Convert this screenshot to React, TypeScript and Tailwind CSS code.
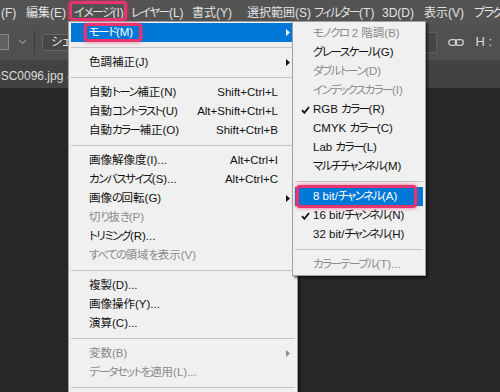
import React from "react";

type Item =
  | "sep"
  | {
      label: string;
      shortcut?: string;
      arrow?: boolean;
      disabled?: boolean;
      active?: boolean;
      checked?: boolean;
      mark?: string;
    };

const mainItems: Item[] = [
  { label: "モード(M)", arrow: true, active: true, mark: "left-[13px] top-0 h-[19px] w-[58px]" },
  "sep",
  { label: "色調補正(J)", arrow: true },
  "sep",
  { label: "自動トーン補正(N)", shortcut: "Shift+Ctrl+L" },
  { label: "自動コントラスト(U)", shortcut: "Alt+Shift+Ctrl+L" },
  { label: "自動カラー補正(O)", shortcut: "Shift+Ctrl+B" },
  "sep",
  { label: "画像解像度(I)...", shortcut: "Alt+Ctrl+I" },
  { label: "カンバスサイズ(S)...", shortcut: "Alt+Ctrl+C" },
  { label: "画像の回転(G)", arrow: true },
  { label: "切り抜き(P)", disabled: true },
  { label: "トリミング(R)..." },
  { label: "すべての領域を表示(V)", disabled: true },
  "sep",
  { label: "複製(D)..." },
  { label: "画像操作(Y)..." },
  { label: "演算(C)..." },
  "sep",
  { label: "変数(B)", disabled: true, arrow: true },
  { label: "データセットを適用(L)...", disabled: true },
  "sep",
];

const modeItems: Item[] = [
  { label: "モノクロ 2 階調(B)", disabled: true },
  { label: "グレースケール(G)" },
  { label: "ダブルトーン(D)", disabled: true },
  { label: "インデックスカラー(I)", disabled: true },
  { label: "RGB カラー(R)", checked: true },
  { label: "CMYK カラー(C)" },
  { label: "Lab カラー(L)" },
  { label: "マルチチャンネル(M)" },
  "sep",
  { label: "8 bit/チャンネル(A)", active: true, mark: "left-[1px] -top-[2px] h-[23px] w-[121px]" },
  { label: "16 bit/チャンネル(N)", checked: true },
  { label: "32 bit/チャンネル(H)" },
  "sep",
  { label: "カラーテーブル(T)...", disabled: true },
];

const menuBar = [
  { label: "(F)", w: "w-[26px] pl-[1px]" },
  { label: "編集(E)", w: "w-[43px]" },
  { label: "イメージ(I)", w: "w-[62px] pl-[5px]" },
  { label: "レイヤー(L)", w: "w-[61px]" },
  { label: "書式(Y)", w: "w-[55px]" },
  { label: "選択範囲(S)", w: "w-[67px]" },
  { label: "フィルター(T)", w: "w-[68px]" },
  { label: "3D(D)", w: "w-[42px]" },
  { label: "表示(V)", w: "w-[50px]" },
  { label: "プラグイン", w: "w-[60px]" },
];

// Kana in the Windows UI font are narrower than Noto's, so tighten kana runs.
function Label({ text }: { text: string }) {
  const parts = text.split(/([\u3040-\u30ff]+)/);
  return (
    <>
      {parts.map((p, i) =>
        /[\u3040-\u30ff]/.test(p) ? (
          <span key={i} className="tracking-[-1.5px]">
            {p}
          </span>
        ) : (
          <React.Fragment key={i}>{p}</React.Fragment>
        ),
      )}
    </>
  );
}

function Arrow({ color }: { color: string }) {
  return (
    <svg width="4" height="7" viewBox="0 0 4 7">
      <polygon points="0,0 4,3.5 0,7" fill={color} />
    </svg>
  );
}

function Check({ color }: { color: string }) {
  return (
    <svg width="9" height="8" viewBox="0 0 9 8">
      <path d="M1 4.2 L3.4 6.8 L8 1" fill="none" stroke={color} strokeWidth="1.8" />
    </svg>
  );
}

function Pink({ pos }: { pos: string }) {
  return (
    <div
      className={`absolute ${pos} rounded-[4px] border-[3px] border-[#e8336d] shadow-[0_0_4px_rgba(232,51,109,0.7)]`}
    />
  );
}

function MenuList({ items, shortcutCol }: { items: Item[]; shortcutCol: boolean }) {
  return (
    <>
      {items.map((it, i) => {
        if (it === "sep") {
          return (
            <div key={i} className="flex h-[11px] items-center px-[2px]">
              <div className="h-px w-full bg-[#c4c4c4]" />
            </div>
          );
        }
        const text = it.active ? "text-white" : it.disabled ? "text-[#8b8b8b]" : "text-[#111]";
        const ic = it.active ? "#ffffff" : it.disabled ? "#8b8b8b" : "#111111";
        return (
          <div
            key={i}
            className={`relative mx-[2px] flex h-[19px] items-center ${it.active ? "bg-[#0078d7]" : ""} ${text}`}
          >
            <div className="flex w-[18px] justify-center pl-[2px]">
              {it.checked && <Check color={ic} />}
            </div>
            <span className="flex-1 whitespace-nowrap">
              <Label text={it.label} />
            </span>
            {it.shortcut && <span className="whitespace-nowrap">{it.shortcut}</span>}
            {shortcutCol && (
              <div className="flex w-[17px] justify-center pl-[2px]">
                {it.arrow && <Arrow color={ic} />}
              </div>
            )}
            {it.mark && <Pink pos={it.mark} />}
          </div>
        );
      })}
    </>
  );
}

export default function App() {
  return (
    <div
      className="relative flex h-[392px] w-[500px] flex-col overflow-hidden bg-[#282828] text-[11.5px] [font-feature-settings:'palt']"
      style={{ fontFamily: "'Liberation Sans', 'Noto Sans CJK JP', sans-serif" }}
    >
      {/* menu bar */}
      <div className="relative flex h-[24px] shrink-0 items-center bg-[#535353] pt-[1px] text-[12px] text-[#e2e2e2]">
        {menuBar.map((m) => (
          <div key={m.label} className={`${m.w} shrink-0 whitespace-nowrap`}>
            <Label text={m.label} />
          </div>
        ))}
        <Pink pos="left-[69px] top-[1px] h-[20px] w-[58px]" />
      </div>

      {/* options bar */}
      <div className="flex h-[36px] shrink-0 items-center bg-[#505050]">
        <div className="ml-[-7px] h-[16px] w-[16px] border border-[#8a8a8a] bg-[#606060]" />
        <svg width="9" height="6" viewBox="0 0 9 6" className="ml-[9px]">
          <path d="M1 1 L4.5 4.5 L8 1" fill="none" stroke="#8e8e8e" strokeWidth="1.2" />
        </svg>
        <div className="ml-[7px] h-[24px] w-px bg-[#3c3c3c]" />
        <div className="ml-[7px] flex h-[17px] w-[60px] items-center rounded-[3px] border border-[#666] bg-[#474747] pl-[8px] text-[12px] text-[#e8e8e8]">
          シェイプ
        </div>
        <div className="flex-1" />
        <div className="h-[21px] w-[22px] border border-[#5e5e5e] bg-[#454545]" />
        <svg width="16" height="7" viewBox="0 0 16 7" className="ml-[11px]">
          <rect x="0.7" y="0.7" width="8" height="5.6" rx="2.8" fill="none" stroke="#cfcfcf" strokeWidth="1.3" />
          <rect x="7.3" y="0.7" width="8" height="5.6" rx="2.8" fill="none" stroke="#cfcfcf" strokeWidth="1.3" />
        </svg>
        <span className="ml-[11px] mr-[8px] whitespace-nowrap text-[13px] text-[#d8d8d8]">H :</span>
      </div>

      {/* document tab bar */}
      <div className="flex h-[28px] shrink-0 items-center bg-[#424242] pt-[3px] text-[12px] text-[#dcdcdc]">
        <span className="ml-[-8px] whitespace-nowrap">DSC0096.jpg @ 16.7% (RGB/8)</span>
      </div>

      <div className="flex-1 bg-[#282828]" />

      {/* image menu */}
      <div className="absolute left-[68px] top-[21px] h-[400px] w-[230px] border border-[#a0a0a0] bg-[#f0f0f0] pt-px shadow-[2px_2px_2px_rgba(0,0,0,0.55)]">
        <MenuList items={mainItems} shortcutCol />
      </div>

      {/* mode submenu */}
      <div className="absolute left-[292px] top-[21px] w-[134px] border border-[#a0a0a0] bg-[#f0f0f0] pb-px pt-[2px] shadow-[2px_2px_2px_rgba(0,0,0,0.55)]">
        <MenuList items={modeItems} shortcutCol={false} />
      </div>
    </div>
  );
}
